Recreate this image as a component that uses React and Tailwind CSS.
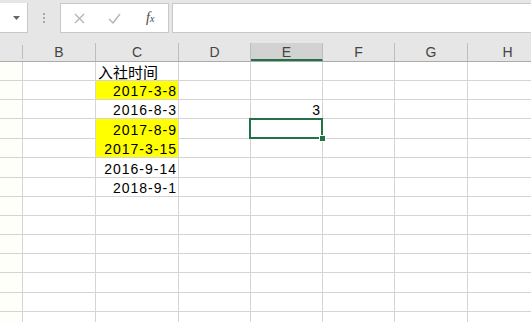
import React from "react";

const cols = [
  { k: "B", w: 73 },
  { k: "C", w: 83 },
  { k: "D", w: 72 },
  { k: "E", w: 72 },
  { k: "F", w: 72 },
  { k: "G", w: 73 },
  { k: "H", w: 80 },
];

const rowHeights = [19, 19, 19, 20, 19, 20, 19, 19, 19, 19, 19, 20, 19, 19];

const data = {
  "0-C": { t: "入社时间", left: true },
  "1-C": { t: "2017-3-8", y: true },
  "2-C": { t: "2016-8-3" },
  "3-C": { t: "2017-8-9", y: true },
  "4-C": { t: "2017-3-15", y: true },
  "5-C": { t: "2016-9-14" },
  "6-C": { t: "2018-9-1" },
  "2-E": { t: "3" },
};

const font = { fontFamily: '"Liberation Sans", "Noto Sans CJK SC", sans-serif' };

export default function App() {
  return (
    <div className="w-[531px] h-[322px] overflow-hidden bg-white relative" style={font}>
      {/* formula bar */}
      <div className="h-[43px] bg-[#e6e6e6] flex items-start pt-[3px]">
        <div className="w-[28px] h-[30px] bg-white border-r border-b border-[#c8c8c8] flex items-center justify-end pr-[7px]">
          <svg width="7" height="4" viewBox="0 0 7 4">
            <path d="M0 0 L7 0 L3.5 4 Z" fill="#666" />
          </svg>
        </div>
        <div className="w-[32px] h-[30px] flex items-center justify-center">
          <div className="flex flex-col gap-[2px]">
            <div className="w-[2px] h-[2px] bg-[#a8a8a8]" />
            <div className="w-[2px] h-[2px] bg-[#a8a8a8]" />
            <div className="w-[2px] h-[2px] bg-[#a8a8a8]" />
          </div>
        </div>
        <div className="w-[109px] h-[30px] bg-white border border-[#c8c8c8] flex items-center">
          <div className="w-[36px] flex justify-center pl-[2px]">
            <svg width="11" height="11" viewBox="0 0 11 11">
              <path d="M1 1 L10 10 M10 1 L1 10" stroke="#b4b4b4" strokeWidth="1.3" />
            </svg>
          </div>
          <div className="w-[36px] flex justify-center">
            <svg width="13" height="11" viewBox="0 0 13 11">
              <path d="M1 6 L5 10 L12 1" stroke="#b4b4b4" strokeWidth="1.4" fill="none" />
            </svg>
          </div>
          <div className="w-[36px] flex justify-center">
            <span className="italic text-[14px] text-[#444] leading-none" style={{ fontFamily: '"Liberation Serif", serif' }}>
              f<span className="text-[10px]">x</span>
            </span>
          </div>
        </div>
        <div className="ml-[3px] flex-1 h-[30px] bg-white border border-[#c8c8c8] border-r-0" />
      </div>

      {/* column header */}
      <div className="flex h-[19px] bg-[#e6e6e6] border-b border-[#ababab]">
        <div className="w-[23px] shrink-0 border-r border-[#bdbdbd] my-[2px]" />
        {cols.map((c) => (
          <div
            key={c.k}
            style={{ width: c.w }}
            className={
              "shrink-0 flex items-center justify-center text-[14px] leading-none text-[#444] " +
              (c.k === "E"
                ? "bg-[#d2d2d2] border-b-2 border-[#217346] border-r border-r-[#bdbdbd]"
                : "border-r border-[#bdbdbd]")
            }
          >
            <span className={c.k === "E" ? "mt-[2px]" : ""}>{c.k}</span>
          </div>
        ))}
      </div>

      {/* rows */}
      {rowHeights.map((h, r) => (
        <div key={r} className="flex" style={{ height: h }}>
          <div className="w-[23px] shrink-0 border-r border-b border-[#d4d4d4] bg-[#fffffa]" />
          {cols.map((c) => {
            const d = data[`${r}-${c.k}`];
            const yellow = d && d.y;
            const nextYellow = data[`${r + 1}-${c.k}`] && data[`${r + 1}-${c.k}`].y;
            const selected = r === 3 && c.k === "E";
            return (
              <div
                key={c.k}
                style={{ width: c.w }}
                className={
                  "shrink-0 relative border-r border-[#d4d4d4] " +
                  (selected ? "z-10 " : "") +
                  (yellow && nextYellow ? "border-b border-b-[#ffff00] " : "border-b ") +
                  (yellow ? "bg-[#ffff00] " : "")
                }
              >
                {d && (
                  <div
                    className={
                      "h-full flex items-center text-[14px] text-black leading-none pt-[2px] " +
                      (d.left ? "justify-start pl-[2px] text-[15px]" : "justify-end pr-[1px] tracking-[1px]")
                    }
                  >
                    {d.t}
                  </div>
                )}
                {selected && (
                  <div className="absolute -left-[2px] -top-[1px] w-[74px] h-[21px] border-2 border-[#217346]">
                    <div className="absolute -right-[5px] -bottom-[5px] w-[7px] h-[7px] bg-[#217346] border border-white" />
                  </div>
                )}
              </div>
            );
          })}
        </div>
      ))}
    </div>
  );
}
